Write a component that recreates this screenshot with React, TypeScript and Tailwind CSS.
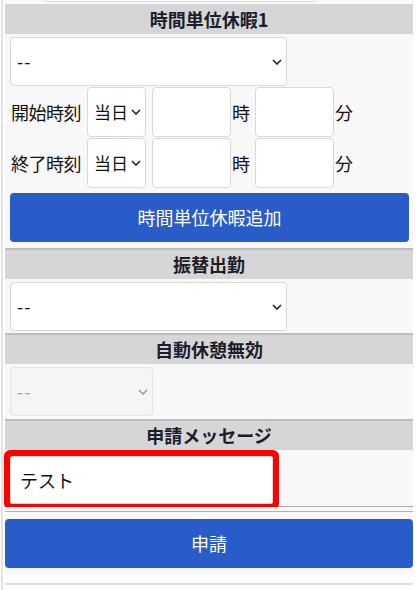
import React from "react";

const font = { fontFamily: '"Noto Sans CJK JP", "Noto Sans", sans-serif' };

function Chevron({ disabled = false }: { disabled?: boolean }) {
  return (
    <svg
      viewBox="0 0 10 6"
      className="pointer-events-none absolute top-1/2 -translate-y-1/2 right-[5px] w-[10px] h-[6px]"
      fill="none"
      stroke={disabled ? "#9a9a9a" : "#222"}
      strokeWidth="1.6"
    >
      <path d="M1 1l4 4 4-4" />
    </svg>
  );
}

function Select({
  value,
  className,
  textClass = "text-[18px] tracking-[1px] pr-5",
  disabled = false,
}: {
  value: string;
  className: string;
  textClass?: string;
  disabled?: boolean;
}) {
  return (
    <div className={`relative ${className}`}>
      <select
        disabled={disabled}
        defaultValue={value}
        className={`appearance-none w-full h-full rounded-[4px] border pl-[6px] outline-none ${textClass} ${
          disabled
            ? "bg-[#f5f5f5] border-[#e4e4e4] text-[#a5a5a5]"
            : "bg-white border-[#d9d9d9] text-[#111]"
        }`}
        style={font}
      >
        <option value={value}>{value}</option>
      </select>
      <Chevron disabled={disabled} />
    </div>
  );
}

function Header({ title, first = false }: { title: string; first?: boolean }) {
  return (
    <div
      className={`flex items-center justify-center bg-[#d5d6d5] font-bold text-[18px] text-[#1c1c2c] ${
        first ? "h-[30px]" : "h-[31px] border-t-2 border-[#bdbdbd]"
      }`}
    >
      {title}
    </div>
  );
}

function TimeRow({ label }: { label: string }) {
  return (
    <div className="flex items-center h-[50px] mt-[1px] text-[18px] text-[#111]">
      <span className="w-[77px] pl-[1px] tracking-[-0.5px]">{label}</span>
      <Select value="当日" className="w-[59px] h-[50px]" textClass="text-[17px] pr-[10px]" />
      <input className="ml-[6px] w-[79px] h-[50px] rounded-[4px] border border-[#d9d9d9] bg-white" />
      <span className="ml-[1px] w-[23px]">時</span>
      <input className="w-[79px] h-[50px] rounded-[4px] border border-[#d9d9d9] bg-white" />
      <span className="ml-[1px]">分</span>
    </div>
  );
}

export default function App() {
  return (
    <div className="min-h-[590px] bg-white pl-px" style={font}>
      <div className="min-h-[590px] border-l-2 border-[#e3e3e3] pl-[2px]">
        <div className="w-[408px]">
          {/* leftover of the field above */}
          <div className="h-[4px] bg-[#fafafa]">
            <div className="ml-[38px] w-[274px] h-[2px] border-b border-x border-[#dcdcdc] rounded-b-[3px]" />
          </div>

          {/* 時間単位休暇1 */}
          <Header title="時間単位休暇1" first />
          <div className="bg-[#f8f8f8] px-[5px] pt-[3px] pb-[6px]">
            <Select value="--" className="w-[277px] h-[49px]" />
            <TimeRow label="開始時刻" />
            <TimeRow label="終了時刻" />
            <button className="mt-[5px] w-[399px] h-[49px] rounded-[4px] bg-[#295bc9] text-white text-[18px]">
              時間単位休暇追加
            </button>
          </div>

          {/* 振替出勤 */}
          <Header title="振替出勤" />
          <div className="bg-[#f8f8f8] px-[5px] pt-[3px] pb-[2px]">
            <Select value="--" className="w-[277px] h-[49px]" />
          </div>

          {/* 自動休憩無効 */}
          <Header title="自動休憩無効" />
          <div className="bg-[#f8f8f8] px-[5px] pt-[3px] pb-[3px]">
            <Select value="--" className="w-[143px] h-[49px]" disabled />
          </div>

          {/* 申請メッセージ */}
          <Header title="申請メッセージ" />
          <div className="bg-[#f8f8f8] px-[5px] pt-[6px] pb-[2px] border-b border-[#ababab]">
            <input
              defaultValue="テスト"
              className="block w-[263px] h-[48px] rounded-[2px] border border-[#d9d9d9] bg-white pl-[9px] text-[18px] text-[#111] ring-[6px] ring-[#ff0000] outline-none"
              style={font}
            />
          </div>

          <div className="h-[4px] bg-[#f8f8f8]" />
          <div className="border-t border-[#b3b3b3] bg-[#f8f8f8] py-[7px]">
            <button className="w-[408px] h-[49px] rounded-[4px] bg-[#295bc9] text-white text-[18px]">
              申請
            </button>
          </div>
          <div className="h-[8px]" />
          <div className="h-[2px] bg-[#dedede]" />
        </div>
      </div>
    </div>
  );
}
